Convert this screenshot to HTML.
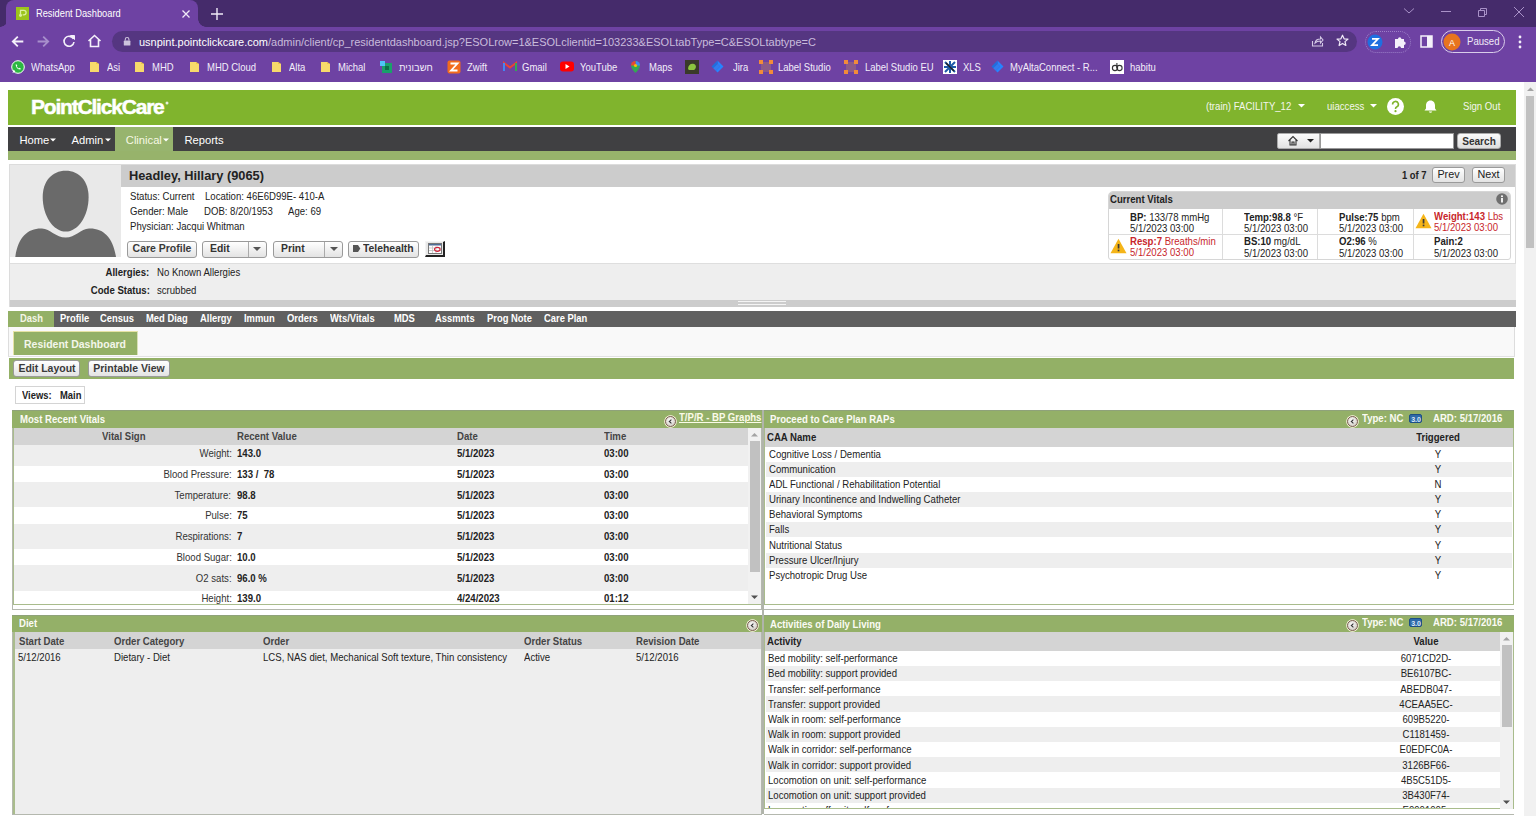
<!DOCTYPE html>
<html><head><meta charset="utf-8"><title>Resident Dashboard</title>
<style>
html,body{margin:0;padding:0;width:1536px;height:816px;overflow:hidden;background:#fff}
body{position:relative;font-family:"Liberation Sans",sans-serif}
.t{position:absolute;white-space:nowrap;font-family:"Liberation Sans",sans-serif}
svg{overflow:visible}
</style></head><body>
<div style="position:absolute;left:0px;top:0px;width:1536px;height:27px;background:#452b6b;"></div>
<div style="position:absolute;left:0px;top:27px;width:1536px;height:55px;background:#6e42a3;"></div>
<div style="position:absolute;left:6px;top:0px;width:192px;height:27px;background:#6e42a3;border-radius:8px 8px 0 0"></div>
<div style="position:absolute;left:0px;top:19px;width:6px;height:8px;background:radial-gradient(circle at 0 0, #452b6b 7.5px, #6e42a3 8px);"></div>
<div style="position:absolute;left:198px;top:19px;width:8px;height:8px;background:radial-gradient(circle at 100% 0, #452b6b 7.5px, #6e42a3 8px);"></div>
<div style="position:absolute;left:16px;top:7px;width:13px;height:13px;background:#9cc41c;"></div>
<svg style="position:absolute;left:16px;top:7px;" width="13" height="13" viewBox="0 0 13 13"><path d="M4.5 9.5 V3.3 H7.8 A2.3 2.3 0 0 1 7.8 7.9 H6.6" stroke="#dcef9e" stroke-width="1.3" fill="none"/><circle cx="4.5" cy="8.3" r="1.5" fill="#dcef9e"/></svg>
<div class="t" style="left:35.5px;top:8.3px;font-size:10.044px;line-height:12px;font-weight:normal;color:#ffffff;transform:scaleX(0.9259);transform-origin:0 0;">Resident Dashboard</div>
<svg style="position:absolute;left:181px;top:9px;" width="10" height="10" viewBox="0 0 10 10"><path d="M1.5 1.5 L8.5 8.5 M8.5 1.5 L1.5 8.5" stroke="#f0eaf8" stroke-width="1.3"/></svg>
<svg style="position:absolute;left:209.5px;top:7px;" width="14" height="14" viewBox="0 0 14 14"><path d="M7 1 V13 M1 7 H13" stroke="#f0eaf8" stroke-width="1.4"/></svg>
<svg style="position:absolute;left:1403px;top:7px;" width="12" height="8" viewBox="0 0 12 8"><path d="M1 1.5 L6 6 L11 1.5" stroke="#a992c8" stroke-width="1" fill="none"/></svg>
<svg style="position:absolute;left:1440px;top:10px;" width="12" height="3" viewBox="0 0 12 3"><path d="M1 1.5 H11" stroke="#a992c8" stroke-width="1"/></svg>
<svg style="position:absolute;left:1476px;top:6px;" width="12" height="12" viewBox="0 0 12 12"><path d="M2.5 4.5 h6 v6 h-6 z M4.5 4.5 v-2 h6 v6 h-2" stroke="#a992c8" stroke-width="1" fill="none"/></svg>
<svg style="position:absolute;left:1513px;top:6px;" width="12" height="12" viewBox="0 0 12 12"><path d="M1 1 L11 11 M11 1 L1 11" stroke="#a992c8" stroke-width="1"/></svg>
<svg style="position:absolute;left:10px;top:35px;" width="15" height="13" viewBox="0 0 15 13"><path d="M13.3 6.5 H3 M7.8 1.6 L2.8 6.5 L7.8 11.4" stroke="#f4f0fa" stroke-width="1.8" fill="none"/></svg>
<svg style="position:absolute;left:36px;top:35px;" width="15" height="13" viewBox="0 0 15 13"><path d="M1.6 6.5 H12 M7.2 1.6 L12.2 6.5 L7.2 11.4" stroke="#a88fcc" stroke-width="1.8" fill="none"/></svg>
<svg style="position:absolute;left:62px;top:34px;" width="14" height="14" viewBox="0 0 14 14"><path d="M11.5 5 A5 5 0 1 0 12 8" stroke="#f4f0fa" stroke-width="1.6" fill="none"/><path d="M8.5 1.5 H12.5 V5.5 z" fill="#f4f0fa" stroke="#f4f0fa" stroke-width="1"/></svg>
<svg style="position:absolute;left:87px;top:34px;" width="15" height="14" viewBox="0 0 15 14"><path d="M1.5 7 L7.5 1.5 L13.5 7 M3.5 5.5 V12.5 H11.5 V5.5" stroke="#f4f0fa" stroke-width="1.6" fill="none"/></svg>
<div style="position:absolute;left:112px;top:31px;width:1245px;height:21px;background:#553681;border-radius:11px"></div>
<svg style="position:absolute;left:122px;top:36px;" width="10" height="11" viewBox="0 0 10 11"><rect x="1.8" y="4.6" width="6.6" height="5" rx="0.6" fill="#cdc3dc"/><path d="M3.3 4.6 V3.3 A1.8 1.8 0 0 1 6.9 3.3 V4.6" stroke="#cdc3dc" stroke-width="1.1" fill="none"/></svg>
<div class="t" style="left:139px;top:35.5px;font-size:11px;line-height:13px;color:#c9bcdc;white-space:nowrap"><span style="color:#fff">usnpint.pointclickcare.com</span>/admin/client/cp_residentdashboard.jsp?ESOLrow=1&amp;ESOLclientid=103233&amp;ESOLtabType=C&amp;ESOLtabtype=C</div>
<svg style="position:absolute;left:1311px;top:35px;" width="13" height="12" viewBox="0 0 13 12"><path d="M1.5 6 V11 H11.5 V8 M4 8 C4.5 5 7 4 9.5 4 V2 L12 5 L9.5 8 V6 C7 6 5.5 6.5 4 8z" stroke="#d5cae6" stroke-width="1.1" fill="none"/></svg>
<svg style="position:absolute;left:1336px;top:34px;" width="13" height="13" viewBox="0 0 13 13"><path d="M6.5 1.2 L8.1 4.8 L12 5.1 L9 7.6 L9.9 11.5 L6.5 9.4 L3.1 11.5 L4 7.6 L1 5.1 L4.9 4.8 Z" stroke="#f0eaf8" stroke-width="1.2" fill="none" stroke-linejoin="round"/></svg>
<div style="position:absolute;left:1365px;top:31px;width:46px;height:22px;background:transparent;border:1px dotted #9c7fc7;border-radius:11px;box-sizing:border-box"></div>
<svg style="position:absolute;left:1367px;top:34px;" width="16" height="16" viewBox="0 0 16 16"><circle cx="8" cy="8" r="7.5" fill="#1f6fe0"/><path d="M5 4.8 H11 L5 11.2 H11" stroke="#fff" stroke-width="1.7" fill="none"/></svg>
<svg style="position:absolute;left:1393px;top:35px;" width="15" height="14" viewBox="0 0 15 14"><path d="M2 4 H5 A1.7 1.7 0 1 1 8.4 4 H11 V6.5 A1.7 1.7 0 1 1 11 9.9 V13 H8 A1.7 1.7 0 1 0 4.6 13 H2 Z" fill="#f4f0fa"/></svg>
<svg style="position:absolute;left:1420px;top:35px;" width="13" height="13" viewBox="0 0 13 13"><rect x="1" y="1" width="11" height="11" stroke="#f4f0fa" stroke-width="1.5" fill="none"/><rect x="7" y="1" width="5" height="11" fill="#f4f0fa"/></svg>
<div style="position:absolute;left:1441px;top:30px;width:64px;height:23px;background:transparent;border:1px solid #d9cdea;border-radius:12px;box-sizing:border-box"></div>
<svg style="position:absolute;left:1443px;top:33px;" width="18" height="18" viewBox="0 0 18 18"><circle cx="9" cy="9" r="8.5" fill="#e8741e"/></svg>
<div class="t" style="left:1302px;width:300px;text-align:center;top:36.8px;font-size:9.72px;line-height:12px;font-weight:normal;color:#fff;transform:scaleX(0.9259);transform-origin:50% 0;">A</div>
<div class="t" style="left:1467px;top:36.3px;font-size:10.368px;line-height:12px;font-weight:normal;color:#f0eaf8;transform:scaleX(0.9259);transform-origin:0 0;">Paused</div>
<svg style="position:absolute;left:1517px;top:35px;" width="6" height="14" viewBox="0 0 6 14"><circle cx="3" cy="2" r="1.4" fill="#f4f0fa"/><circle cx="3" cy="7" r="1.4" fill="#f4f0fa"/><circle cx="3" cy="12" r="1.4" fill="#f4f0fa"/></svg>
<svg style="position:absolute;left:11px;top:60px;" width="14" height="14" viewBox="0 0 14 14"><circle cx="7" cy="7" r="6.3" fill="#2cb742" stroke="#fff" stroke-width="1"/><path d="M1.5 13 L2.5 9.5 L4.5 11.5z" fill="#fff"/><path d="M4.6 4.5 C4.8 7.5 6.8 9.5 9.5 9.6 L9.7 8.4 L8.5 7.8 L7.8 8.4 C6.9 8 6.1 7.2 5.7 6.3 L6.3 5.6 L5.8 4.4 Z" fill="#fff"/></svg>
<div class="t" style="left:30.5px;top:61.8px;font-size:10.26px;line-height:12px;font-weight:normal;color:#f3eefa;transform:scaleX(0.9259);transform-origin:0 0;">WhatsApp</div>
<svg style="position:absolute;left:89px;top:61px;" width="11" height="12" viewBox="0 0 11 12"><path d="M1 1 H7 L10 3 V11 H1 Z" fill="#f7d96b"/><path d="M7 1 V3 H10" fill="#e9c24a"/></svg>
<div class="t" style="left:106.5px;top:61.8px;font-size:10.26px;line-height:12px;font-weight:normal;color:#f3eefa;transform:scaleX(0.9259);transform-origin:0 0;">Asi</div>
<svg style="position:absolute;left:134px;top:61px;" width="11" height="12" viewBox="0 0 11 12"><path d="M1 1 H7 L10 3 V11 H1 Z" fill="#f7d96b"/><path d="M7 1 V3 H10" fill="#e9c24a"/></svg>
<div class="t" style="left:152px;top:61.8px;font-size:10.26px;line-height:12px;font-weight:normal;color:#f3eefa;transform:scaleX(0.9259);transform-origin:0 0;">MHD</div>
<svg style="position:absolute;left:189px;top:61px;" width="11" height="12" viewBox="0 0 11 12"><path d="M1 1 H7 L10 3 V11 H1 Z" fill="#f7d96b"/><path d="M7 1 V3 H10" fill="#e9c24a"/></svg>
<div class="t" style="left:206.5px;top:61.8px;font-size:10.26px;line-height:12px;font-weight:normal;color:#f3eefa;transform:scaleX(0.9259);transform-origin:0 0;">MHD Cloud</div>
<svg style="position:absolute;left:271px;top:61px;" width="11" height="12" viewBox="0 0 11 12"><path d="M1 1 H7 L10 3 V11 H1 Z" fill="#f7d96b"/><path d="M7 1 V3 H10" fill="#e9c24a"/></svg>
<div class="t" style="left:289px;top:61.8px;font-size:10.26px;line-height:12px;font-weight:normal;color:#f3eefa;transform:scaleX(0.9259);transform-origin:0 0;">Alta</div>
<svg style="position:absolute;left:320px;top:61px;" width="11" height="12" viewBox="0 0 11 12"><path d="M1 1 H7 L10 3 V11 H1 Z" fill="#f7d96b"/><path d="M7 1 V3 H10" fill="#e9c24a"/></svg>
<div class="t" style="left:338px;top:61.8px;font-size:10.26px;line-height:12px;font-weight:normal;color:#f3eefa;transform:scaleX(0.9259);transform-origin:0 0;">Michal</div>
<svg style="position:absolute;left:380px;top:61px;" width="13" height="13" viewBox="0 0 13 13"><rect x="2" y="2" width="10" height="10" fill="#1aa06a"/><rect x="0" y="0" width="5" height="5" fill="#4fc3f7"/><rect x="5" y="5" width="4" height="4" fill="#0d6e47"/></svg>
<div class="t" style="left:399px;top:61.8px;font-size:10.26px;line-height:12px;font-weight:normal;color:#f3eefa;transform:scaleX(0.9259);transform-origin:0 0;">חשבונית</div>
<svg style="position:absolute;left:447px;top:60px;" width="14" height="14" viewBox="0 0 14 14"><rect x="0.5" y="0.5" width="13" height="13" rx="2" fill="#f26b1d"/><path d="M3.5 3.5 H10.5 L4 10.5 H10.5" stroke="#fff" stroke-width="1.8" fill="none"/></svg>
<div class="t" style="left:466.5px;top:61.8px;font-size:10.26px;line-height:12px;font-weight:normal;color:#f3eefa;transform:scaleX(0.9259);transform-origin:0 0;">Zwift</div>
<svg style="position:absolute;left:503px;top:61px;" width="14" height="11" viewBox="0 0 14 11"><path d="M1 10 V2 L7 6.5 L13 2 V10" stroke="#ea4335" stroke-width="2" fill="none"/><path d="M1 10 V2" stroke="#4285f4" stroke-width="2"/><path d="M13 10 V2" stroke="#34a853" stroke-width="2"/></svg>
<div class="t" style="left:522px;top:61.8px;font-size:10.26px;line-height:12px;font-weight:normal;color:#f3eefa;transform:scaleX(0.9259);transform-origin:0 0;">Gmail</div>
<svg style="position:absolute;left:560px;top:61px;" width="14" height="11" viewBox="0 0 14 11"><rect x="0" y="0.5" width="14" height="10" rx="3" fill="#ff0000"/><path d="M5.5 3 L9.5 5.5 L5.5 8z" fill="#fff"/></svg>
<div class="t" style="left:580px;top:61.8px;font-size:10.26px;line-height:12px;font-weight:normal;color:#f3eefa;transform:scaleX(0.9259);transform-origin:0 0;">YouTube</div>
<svg style="position:absolute;left:630px;top:60px;" width="11" height="14" viewBox="0 0 11 14"><path d="M5.5 1 A4.5 4.5 0 0 1 10 5.5 C10 8.5 5.5 13 5.5 13 C5.5 13 1 8.5 1 5.5 A4.5 4.5 0 0 1 5.5 1z" fill="#34a853"/><path d="M5.5 1 A4.5 4.5 0 0 1 10 5.5 L5.5 5.5z" fill="#4285f4"/><path d="M1 5.5 A4.5 4.5 0 0 1 5.5 1 L5.5 5.5z" fill="#ea4335"/><circle cx="5.5" cy="5.5" r="1.6" fill="#fbbc04"/></svg>
<div class="t" style="left:648.5px;top:61.8px;font-size:10.26px;line-height:12px;font-weight:normal;color:#f3eefa;transform:scaleX(0.9259);transform-origin:0 0;">Maps</div>
<svg style="position:absolute;left:685px;top:60px;" width="14" height="14" viewBox="0 0 14 14"><rect x="0" y="0" width="14" height="14" fill="#3a3a2a"/><path d="M3 9 C3 5 6 3 9 4 C12 5 11 9 9 10 H4z" fill="#8cc63f"/></svg>
<svg style="position:absolute;left:711px;top:60px;" width="13" height="14" viewBox="0 0 13 14"><path d="M6.5 0.5 L12.5 6.5 L6.5 12.5 L4.8 10.8 L9.1 6.5 L6.5 3.9 Z" fill="#2684ff"/><path d="M6.5 3.9 L2.2 8.2 L0.5 6.5 L6.5 0.5 Z" fill="#1d6fe0"/><path d="M4.8 10.8 L2.2 8.2 L6.5 3.9 L9.1 6.5 Z" fill="#2f7df0"/></svg>
<div class="t" style="left:733px;top:61.8px;font-size:10.26px;line-height:12px;font-weight:normal;color:#f3eefa;transform:scaleX(0.9259);transform-origin:0 0;">Jira</div>
<svg style="position:absolute;left:759px;top:60px;" width="14" height="14" viewBox="0 0 14 14"><rect x="2" y="2" width="10" height="10" fill="#8a5a8a"/><rect x="0" y="0" width="4" height="4" fill="#f28b3a"/><rect x="10" y="0" width="4" height="4" fill="#f28b3a"/><rect x="0" y="10" width="4" height="4" fill="#f28b3a"/><rect x="10" y="10" width="4" height="4" fill="#f28b3a"/></svg>
<div class="t" style="left:778px;top:61.8px;font-size:10.26px;line-height:12px;font-weight:normal;color:#f3eefa;transform:scaleX(0.9259);transform-origin:0 0;">Label Studio</div>
<svg style="position:absolute;left:844px;top:60px;" width="14" height="14" viewBox="0 0 14 14"><rect x="2" y="2" width="10" height="10" fill="#8a5a8a"/><rect x="0" y="0" width="4" height="4" fill="#f28b3a"/><rect x="10" y="0" width="4" height="4" fill="#f28b3a"/><rect x="0" y="10" width="4" height="4" fill="#f28b3a"/><rect x="10" y="10" width="4" height="4" fill="#f28b3a"/></svg>
<div class="t" style="left:864.5px;top:61.8px;font-size:10.26px;line-height:12px;font-weight:normal;color:#f3eefa;transform:scaleX(0.9259);transform-origin:0 0;">Label Studio EU</div>
<svg style="position:absolute;left:943px;top:60px;" width="14" height="14" viewBox="0 0 14 14"><rect x="0" y="0" width="14" height="14" fill="#fff"/><path d="M2 2 L12 12 M12 2 L2 12 M7 1 V13 M1 7 H13" stroke="#1e5aa8" stroke-width="2"/><path d="M3 3 L11 11" stroke="#222" stroke-width="1.5"/></svg>
<div class="t" style="left:962.5px;top:61.8px;font-size:10.26px;line-height:12px;font-weight:normal;color:#f3eefa;transform:scaleX(0.9259);transform-origin:0 0;">XLS</div>
<svg style="position:absolute;left:991px;top:60px;" width="13" height="14" viewBox="0 0 13 14"><path d="M6.5 0.5 L12.5 6.5 L6.5 12.5 L4.8 10.8 L9.1 6.5 L6.5 3.9 Z" fill="#2684ff"/><path d="M6.5 3.9 L2.2 8.2 L0.5 6.5 L6.5 0.5 Z" fill="#1d6fe0"/><path d="M4.8 10.8 L2.2 8.2 L6.5 3.9 L9.1 6.5 Z" fill="#2f7df0"/></svg>
<div class="t" style="left:1010px;top:61.8px;font-size:10.26px;line-height:12px;font-weight:normal;color:#f3eefa;transform:scaleX(0.9259);transform-origin:0 0;">MyAltaConnect - R...</div>
<svg style="position:absolute;left:1110px;top:60px;" width="14" height="14" viewBox="0 0 14 14"><rect x="0" y="0" width="14" height="14" fill="#fff"/><circle cx="5" cy="8" r="2.6" stroke="#333" stroke-width="1.1" fill="none"/><circle cx="9.5" cy="8" r="2.6" stroke="#333" stroke-width="1.1" fill="none"/><path d="M6.9 3 V8" stroke="#333" stroke-width="1.1"/></svg>
<div class="t" style="left:1130px;top:61.8px;font-size:10.26px;line-height:12px;font-weight:normal;color:#f3eefa;transform:scaleX(0.9259);transform-origin:0 0;">habitu</div>
<div style="position:absolute;left:0px;top:82px;width:1536px;height:734px;background:#ffffff;"></div>
<div style="position:absolute;left:1524px;top:82px;width:12px;height:734px;background:#f1f1f1;"></div>
<div style="position:absolute;left:1526px;top:96px;width:8px;height:152px;background:#c1c1c1;"></div>
<svg style="position:absolute;left:1525.5px;top:86px;" width="9" height="6" viewBox="0 0 9 6"><path d="M1 5 L4.5 1.5 L8 5z" fill="#a3a3a3"/></svg>
<div style="position:absolute;left:8px;top:90px;width:1508px;height:35px;background:#80b42d;"></div>
<div class="t" style="left:31px;top:94px;font-size:21px;line-height:26px;font-weight:bold;color:#fff;letter-spacing:-1.2px;-webkit-text-stroke:0.5px #fff">PointClickCare</div>
<svg style="position:absolute;left:164.5px;top:100.5px;" width="4" height="4" viewBox="0 0 4 4"><circle cx="2" cy="2" r="1.5" fill="#e8f0dc"/></svg>
<div class="t" style="left:1206.3px;top:100.8px;font-size:10.368px;line-height:12px;font-weight:normal;color:#f4f6ec;transform:scaleX(0.9259);transform-origin:0 0;">(train) FACILITY_12</div>
<svg style="position:absolute;left:1298px;top:104px;" width="7" height="4" viewBox="0 0 7 4"><path d="M0 0 H7 L3.5 3.5z" fill="#fff"/></svg>
<div class="t" style="left:1326.6px;top:100.8px;font-size:10.368px;line-height:12px;font-weight:normal;color:#f4f6ec;transform:scaleX(0.9259);transform-origin:0 0;">uiaccess</div>
<svg style="position:absolute;left:1369.5px;top:104px;" width="7" height="4" viewBox="0 0 7 4"><path d="M0 0 H7 L3.5 3.5z" fill="#fff"/></svg>
<svg style="position:absolute;left:1387px;top:98px;" width="17" height="17" viewBox="0 0 17 17"><circle cx="8.5" cy="8.5" r="8.5" fill="#fff"/><path d="M5.6 6.4 A2.9 2.9 0 1 1 9.6 9 C8.8 9.4 8.5 9.8 8.5 11" stroke="#80b42d" stroke-width="1.6" fill="none"/><circle cx="8.5" cy="13.2" r="1.1" fill="#80b42d"/></svg>
<svg style="position:absolute;left:1423px;top:99px;" width="15" height="15" viewBox="0 0 15 15"><path d="M7.5 1.5 C4.5 1.5 3 4 3 6.5 V9.5 L1.5 11.5 H13.5 L12 9.5 V6.5 C12 4 10.5 1.5 7.5 1.5z" fill="#fff"/><path d="M5.8 12.5 A1.8 1.8 0 0 0 9.2 12.5z" fill="#fff"/></svg>
<div class="t" style="left:1462.8px;top:100.8px;font-size:10.368px;line-height:12px;font-weight:normal;color:#f4f6ec;transform:scaleX(0.9259);transform-origin:0 0;">Sign Out</div>
<div style="position:absolute;left:8px;top:127px;width:1508px;height:24px;background:#404042;"></div>
<div style="position:absolute;left:114.6px;top:127px;width:58.6px;height:24px;background:#97b46e;"></div>
<div class="t" style="left:19.5px;top:132.5px;font-size:11.2px;line-height:14px;font-weight:normal;color:#fff;transform-origin:0 0;">Home</div>
<svg style="position:absolute;left:50px;top:138px;" width="6" height="4" viewBox="0 0 6 4"><path d="M0 0.5 H6 L3 3.5z" fill="#fff"/></svg>
<div class="t" style="left:71.5px;top:132.5px;font-size:11.2px;line-height:14px;font-weight:normal;color:#fff;transform-origin:0 0;">Admin</div>
<svg style="position:absolute;left:105px;top:138px;" width="6" height="4" viewBox="0 0 6 4"><path d="M0 0.5 H6 L3 3.5z" fill="#fff"/></svg>
<div class="t" style="left:125.8px;top:132.5px;font-size:11.2px;line-height:14px;font-weight:normal;color:#f6f8e4;transform-origin:0 0;">Clinical</div>
<svg style="position:absolute;left:163.3px;top:138px;" width="6" height="4" viewBox="0 0 6 4"><path d="M0 0.5 H6 L3 3.5z" fill="#fff"/></svg>
<div class="t" style="left:184.4px;top:132.5px;font-size:11.2px;line-height:14px;font-weight:normal;color:#fff;transform-origin:0 0;">Reports</div>
<div style="position:absolute;left:1277px;top:133px;width:43px;height:16px;background:linear-gradient(#fbfbfb,#e2e2e2);border:1px solid #aaa;border-radius:2px 0 0 2px;box-sizing:border-box"></div>
<svg style="position:absolute;left:1287px;top:135px;" width="12" height="11" viewBox="0 0 12 11"><path d="M1.5 6 L6 1.5 L10.5 6 M3 5 V10 H9 V5 M5 10 V7 H7 V10" stroke="#333" stroke-width="1.1" fill="none"/></svg>
<svg style="position:absolute;left:1307px;top:139px;" width="7" height="4" viewBox="0 0 7 4"><path d="M0 0 H7 L3.5 3.5z" fill="#222"/></svg>
<div style="position:absolute;left:1320px;top:133px;width:134px;height:16px;background:#fff;border:1px solid #999;box-sizing:border-box"></div>
<div style="position:absolute;left:1457px;top:133px;width:44px;height:16px;background:linear-gradient(#fbfbfb,#dedede);border:1px solid #aaa;border-radius:3px;box-sizing:border-box"></div>
<div class="t" style="left:1329px;width:300px;text-align:center;top:135.0px;font-size:10.908px;line-height:12px;font-weight:bold;color:#333;transform:scaleX(0.9259);transform-origin:50% 0;">Search</div>
<div style="position:absolute;left:8px;top:151px;width:1508px;height:9px;background:#97b36b;"></div>
<div style="position:absolute;left:9px;top:164px;width:1507px;height:143px;background:#fff;border:1px solid #dcdcdc;box-sizing:border-box"></div>
<div style="position:absolute;left:10px;top:165px;width:111px;height:92px;background:#e9e9e9;"></div>
<svg style="position:absolute;left:10px;top:165px;" width="111" height="92" viewBox="0 0 111 92"><path d="M55.7 5.8 C69.5 5.8 78.6 16.5 78.6 32 C78.6 51 68 66.6 55.7 66.6 C43.4 66.6 32.7 51 32.7 32 C32.7 16.5 41.9 5.8 55.7 5.8z" fill="#6a6a6a"/><path d="M5.3 92 C8 72 18 63 32 63.5 C40 64 46 72.5 55.7 72.5 C65 72.5 71 64 79 63.5 C93 63 103 72 106 92z" fill="#6a6a6a"/></svg>
<div style="position:absolute;left:121px;top:165px;width:1394px;height:22px;background:#cccccc;"></div>
<div class="t" style="left:129px;top:167.5px;font-size:12.8px;line-height:15px;font-weight:bold;color:#222;transform-origin:0 0;">Headley, Hillary (9065)</div>
<div class="t" style="left:1402px;top:169.8px;font-size:10.152px;line-height:12px;font-weight:bold;color:#222;transform:scaleX(0.9259);transform-origin:0 0;">1 of 7</div>
<div style="position:absolute;left:1432px;top:167px;width:33px;height:16px;background:linear-gradient(#ffffff,#e3e3e3);border:1px solid #9a9a9a;border-radius:3px;box-sizing:border-box;"></div>
<div class="t" style="left:1298.5px;width:300px;text-align:center;top:167.5px;font-size:10.8px;line-height:12px;font-weight:normal;color:#222;transform-origin:50% 0;">Prev</div>
<div style="position:absolute;left:1472px;top:167px;width:33px;height:16px;background:linear-gradient(#ffffff,#e3e3e3);border:1px solid #9a9a9a;border-radius:3px;box-sizing:border-box;"></div>
<div class="t" style="left:1338.5px;width:300px;text-align:center;top:167.5px;font-size:10.8px;line-height:12px;font-weight:normal;color:#222;transform-origin:50% 0;">Next</div>
<div class="t" style="left:129.7px;top:190.8px;font-size:10.368px;line-height:12px;font-weight:normal;color:#222;transform:scaleX(0.9259);transform-origin:0 0;">Status: Current</div>
<div class="t" style="left:205.3px;top:190.8px;font-size:10.368px;line-height:12px;font-weight:normal;color:#222;transform:scaleX(0.9259);transform-origin:0 0;">Location: 46E6D99E- 410-A</div>
<div class="t" style="left:129.7px;top:205.8px;font-size:10.368px;line-height:12px;font-weight:normal;color:#222;transform:scaleX(0.9259);transform-origin:0 0;">Gender: Male</div>
<div class="t" style="left:203.8px;top:205.8px;font-size:10.368px;line-height:12px;font-weight:normal;color:#222;transform:scaleX(0.9259);transform-origin:0 0;">DOB: 8/20/1953</div>
<div class="t" style="left:288px;top:205.8px;font-size:10.368px;line-height:12px;font-weight:normal;color:#222;transform:scaleX(0.9259);transform-origin:0 0;">Age: 69</div>
<div class="t" style="left:129.7px;top:221.10000000000002px;font-size:10.368px;line-height:12px;font-weight:normal;color:#222;transform:scaleX(0.9259);transform-origin:0 0;">Physician: Jacqui Whitman</div>
<div style="position:absolute;left:127px;top:240.5px;width:70px;height:17px;background:linear-gradient(#ffffff,#e3e3e3);border:1px solid #9a9a9a;border-radius:3px;box-sizing:border-box;"></div>
<div class="t" style="left:12.0px;width:300px;text-align:center;top:242.3px;font-size:11.34px;line-height:12px;font-weight:bold;color:#3a3a3a;transform:scaleX(0.9259);transform-origin:50% 0;">Care Profile</div>
<div style="position:absolute;left:202px;top:240.5px;width:65px;height:17px;background:linear-gradient(#ffffff,#e3e3e3);border:1px solid #9a9a9a;border-radius:3px;box-sizing:border-box;"></div>
<div class="t" style="left:209.5px;top:242.4px;font-size:11.232px;line-height:12px;font-weight:bold;color:#333;transform:scaleX(0.9259);transform-origin:0 0;">Edit</div>
<div style="position:absolute;left:247.5px;top:241.5px;width:1px;height:15px;background:#aaa;"></div>
<svg style="position:absolute;left:253px;top:247px;" width="8" height="5" viewBox="0 0 8 5"><path d="M0 0 H8 L4 4z" fill="#555"/></svg>
<div style="position:absolute;left:272.5px;top:240.5px;width:70px;height:17px;background:linear-gradient(#ffffff,#e3e3e3);border:1px solid #9a9a9a;border-radius:3px;box-sizing:border-box;"></div>
<div class="t" style="left:280.5px;top:242.4px;font-size:11.232px;line-height:12px;font-weight:bold;color:#333;transform:scaleX(0.9259);transform-origin:0 0;">Print</div>
<div style="position:absolute;left:324px;top:241.5px;width:1px;height:15px;background:#aaa;"></div>
<svg style="position:absolute;left:329.5px;top:247px;" width="8" height="5" viewBox="0 0 8 5"><path d="M0 0 H8 L4 4z" fill="#555"/></svg>
<div style="position:absolute;left:348px;top:240.5px;width:71px;height:17px;background:linear-gradient(#ffffff,#e3e3e3);border:1px solid #9a9a9a;border-radius:3px;box-sizing:border-box;"></div>
<svg style="position:absolute;left:352.5px;top:245px;" width="7" height="8" viewBox="0 0 7 8"><path d="M0 0 H5 L7.3 3.5 L5 7 H0z" fill="#555"/></svg>
<div class="t" style="left:363px;top:242.4px;font-size:11.232px;line-height:12px;font-weight:bold;color:#333;transform:scaleX(0.9259);transform-origin:0 0;">Telehealth</div>
<div style="position:absolute;left:425px;top:241px;width:20px;height:16px;background:#e8e8e8;border-top:1px solid #f4f4f4;border-left:1px solid #f4f4f4;border-right:2px solid #222;border-bottom:2px solid #222;box-sizing:border-box"></div>
<svg style="position:absolute;left:427.5px;top:243px;" width="14" height="11" viewBox="0 0 14 11"><rect x="0.5" y="0.5" width="13" height="10" fill="#fff" stroke="#777" stroke-width="1"/><rect x="1" y="1" width="12" height="1.5" fill="#4f6d96"/><path d="M1 5 H13 M1 7.5 H13 M4.5 2.5 V10 M8 2.5 V10" stroke="#bbb" stroke-width="0.7"/><ellipse cx="9.3" cy="6.3" rx="2.8" ry="2" fill="none" stroke="#d0233a" stroke-width="1.2"/></svg>
<div style="position:absolute;left:1108px;top:191px;width:403px;height:69px;background:#fff;border:1px solid #d6d6d6;border-radius:5px 5px 3px 3px;box-sizing:border-box"></div>
<div style="position:absolute;left:1109px;top:192px;width:401px;height:17px;background:#cccccc;border-radius:4px 4px 0 0"></div>
<div class="t" style="left:1110.3px;top:194.0px;font-size:10.368px;line-height:12px;font-weight:bold;color:#222;transform:scaleX(0.9259);transform-origin:0 0;">Current Vitals</div>
<svg style="position:absolute;left:1496px;top:193px;" width="12" height="12" viewBox="0 0 12 12"><circle cx="6" cy="6" r="5.8" fill="#6f6f6f"/><rect x="5.1" y="5" width="1.8" height="4.5" fill="#fff"/><circle cx="6" cy="3.2" r="1" fill="#fff"/></svg>
<div style="position:absolute;left:1222px;top:209px;width:1px;height:50px;background:#dcdcdc;"></div>
<div style="position:absolute;left:1317px;top:209px;width:1px;height:50px;background:#dcdcdc;"></div>
<div style="position:absolute;left:1413px;top:209px;width:1px;height:50px;background:#dcdcdc;"></div>
<div style="position:absolute;left:1109px;top:234px;width:401px;height:1px;background:#dcdcdc;"></div>
<div class="t" style="left:1129.8px;top:211.5px;font-size:10.368px;line-height:12px;color:#222;transform:scaleX(0.9259);transform-origin:0 0"><b>BP:</b> 133/78 mmHg</div>
<div class="t" style="left:1129.8px;top:223.0px;font-size:10.368px;line-height:12px;color:#222;transform:scaleX(0.9259);transform-origin:0 0"><b></b>5/1/2023 03:00</div>
<div class="t" style="left:1243.6px;top:211.5px;font-size:10.368px;line-height:12px;color:#222;transform:scaleX(0.9259);transform-origin:0 0"><b>Temp:98.8</b> °F</div>
<div class="t" style="left:1243.6px;top:223.0px;font-size:10.368px;line-height:12px;color:#222;transform:scaleX(0.9259);transform-origin:0 0"><b></b>5/1/2023 03:00</div>
<div class="t" style="left:1339px;top:211.5px;font-size:10.368px;line-height:12px;color:#222;transform:scaleX(0.9259);transform-origin:0 0"><b>Pulse:75</b> bpm</div>
<div class="t" style="left:1339px;top:223.0px;font-size:10.368px;line-height:12px;color:#222;transform:scaleX(0.9259);transform-origin:0 0"><b></b>5/1/2023 03:00</div>
<div class="t" style="left:1434px;top:211.0px;font-size:10.368px;line-height:12px;color:#c8262b;transform:scaleX(0.9259);transform-origin:0 0"><b>Weight:143</b> Lbs</div>
<div class="t" style="left:1434px;top:222.3px;font-size:10.368px;line-height:12px;color:#c8262b;transform:scaleX(0.9259);transform-origin:0 0"><b></b>5/1/2023 03:00</div>
<div class="t" style="left:1129.8px;top:235.8px;font-size:10.368px;line-height:12px;color:#c8262b;transform:scaleX(0.9259);transform-origin:0 0"><b>Resp:7</b> Breaths/min</div>
<div class="t" style="left:1129.8px;top:247.10000000000002px;font-size:10.368px;line-height:12px;color:#c8262b;transform:scaleX(0.9259);transform-origin:0 0"><b></b>5/1/2023 03:00</div>
<div class="t" style="left:1243.6px;top:236.10000000000002px;font-size:10.368px;line-height:12px;color:#222;transform:scaleX(0.9259);transform-origin:0 0"><b>BS:10</b> mg/dL</div>
<div class="t" style="left:1243.6px;top:247.5px;font-size:10.368px;line-height:12px;color:#222;transform:scaleX(0.9259);transform-origin:0 0"><b></b>5/1/2023 03:00</div>
<div class="t" style="left:1339px;top:236.10000000000002px;font-size:10.368px;line-height:12px;color:#222;transform:scaleX(0.9259);transform-origin:0 0"><b>O2:96</b> %</div>
<div class="t" style="left:1339px;top:247.5px;font-size:10.368px;line-height:12px;color:#222;transform:scaleX(0.9259);transform-origin:0 0"><b></b>5/1/2023 03:00</div>
<div class="t" style="left:1434px;top:236.10000000000002px;font-size:10.368px;line-height:12px;color:#222;transform:scaleX(0.9259);transform-origin:0 0"><b>Pain:2</b></div>
<div class="t" style="left:1434px;top:247.5px;font-size:10.368px;line-height:12px;color:#222;transform:scaleX(0.9259);transform-origin:0 0"><b></b>5/1/2023 03:00</div>
<svg style="position:absolute;left:1415.3px;top:213px;" width="17" height="16" viewBox="0 0 17 16"><path d="M8.5 0.8 L16.5 15.2 H0.5 Z" fill="#f5b519"/><rect x="7.7" y="6" width="1.7" height="4.5" fill="#3a3a3a"/><rect x="7.7" y="11.6" width="1.7" height="1.7" fill="#3a3a3a"/></svg>
<svg style="position:absolute;left:1110.3px;top:238px;" width="17" height="16" viewBox="0 0 17 16"><path d="M8.5 0.8 L16.5 15.2 H0.5 Z" fill="#f5b519"/><rect x="7.7" y="6" width="1.7" height="4.5" fill="#3a3a3a"/><rect x="7.7" y="11.6" width="1.7" height="1.7" fill="#3a3a3a"/></svg>
<div style="position:absolute;left:10px;top:263px;width:1505.5px;height:37px;background:#eeeeee;border-top:1px solid #dedede;box-sizing:border-box"></div>
<div class="t" style="right:1386.5px;top:267.3px;font-size:10.368px;line-height:12px;font-weight:bold;color:#222;transform:scaleX(0.9259);transform-origin:100% 0;">Allergies:</div>
<div class="t" style="left:157.2px;top:267.3px;font-size:10.368px;line-height:12px;font-weight:normal;color:#222;transform:scaleX(0.9259);transform-origin:0 0;">No Known Allergies</div>
<div class="t" style="right:1386.5px;top:285.1px;font-size:10.368px;line-height:12px;font-weight:bold;color:#222;transform:scaleX(0.9259);transform-origin:100% 0;">Code Status:</div>
<div class="t" style="left:157.2px;top:285.1px;font-size:10.368px;line-height:12px;font-weight:normal;color:#222;transform:scaleX(0.9259);transform-origin:0 0;">scrubbed</div>
<div style="position:absolute;left:10px;top:299.5px;width:1505.5px;height:7px;background:#cccccc;"></div>
<div style="position:absolute;left:738px;top:301px;width:48px;height:1px;background:#f4f4f4;"></div>
<div style="position:absolute;left:738px;top:303.5px;width:48px;height:1px;background:#f4f4f4;"></div>
<div style="position:absolute;left:8px;top:311px;width:1508px;height:15.5px;background:#606060;"></div>
<div style="position:absolute;left:8px;top:311px;width:46px;height:15.5px;background:#93b066;"></div>
<div class="t" style="left:19.5px;top:313.1px;font-size:10.152px;line-height:12px;font-weight:bold;color:#f3f6e6;transform:scaleX(0.9259);transform-origin:0 0;">Dash</div>
<div class="t" style="left:59.6px;top:313.1px;font-size:10.152px;line-height:12px;font-weight:bold;color:#fff;transform:scaleX(0.9259);transform-origin:0 0;">Profile</div>
<div class="t" style="left:100px;top:313.1px;font-size:10.152px;line-height:12px;font-weight:bold;color:#fff;transform:scaleX(0.9259);transform-origin:0 0;">Census</div>
<div class="t" style="left:146px;top:313.1px;font-size:10.152px;line-height:12px;font-weight:bold;color:#fff;transform:scaleX(0.9259);transform-origin:0 0;">Med Diag</div>
<div class="t" style="left:200px;top:313.1px;font-size:10.152px;line-height:12px;font-weight:bold;color:#fff;transform:scaleX(0.9259);transform-origin:0 0;">Allergy</div>
<div class="t" style="left:243.7px;top:313.1px;font-size:10.152px;line-height:12px;font-weight:bold;color:#fff;transform:scaleX(0.9259);transform-origin:0 0;">Immun</div>
<div class="t" style="left:287px;top:313.1px;font-size:10.152px;line-height:12px;font-weight:bold;color:#fff;transform:scaleX(0.9259);transform-origin:0 0;">Orders</div>
<div class="t" style="left:329.5px;top:313.1px;font-size:10.152px;line-height:12px;font-weight:bold;color:#fff;transform:scaleX(0.9259);transform-origin:0 0;">Wts/Vitals</div>
<div class="t" style="left:394px;top:313.1px;font-size:10.152px;line-height:12px;font-weight:bold;color:#fff;transform:scaleX(0.9259);transform-origin:0 0;">MDS</div>
<div class="t" style="left:434.5px;top:313.1px;font-size:10.152px;line-height:12px;font-weight:bold;color:#fff;transform:scaleX(0.9259);transform-origin:0 0;">Assmnts</div>
<div class="t" style="left:486.5px;top:313.1px;font-size:10.152px;line-height:12px;font-weight:bold;color:#fff;transform:scaleX(0.9259);transform-origin:0 0;">Prog Note</div>
<div class="t" style="left:543.5px;top:313.1px;font-size:10.152px;line-height:12px;font-weight:bold;color:#fff;transform:scaleX(0.9259);transform-origin:0 0;">Care Plan</div>
<div style="position:absolute;left:8px;top:326.5px;width:1507px;height:30.5px;background:#f9f9f9;border-left:1px solid #ddd;border-right:1px solid #ddd;border-bottom:1px solid #e2e2e2;box-sizing:border-box"></div>
<div style="position:absolute;left:12.7px;top:330.8px;width:125.6px;height:24.6px;background:#93b066;border-top:1px solid #e6e3a4;border-left:1px solid #e6e3a4;border-right:1px solid #d8e0b8;box-sizing:border-box"></div>
<div class="t" style="left:24.4px;top:338.1px;font-size:11.34px;line-height:12px;font-weight:bold;color:#f3f6ea;transform:scaleX(0.9259);transform-origin:0 0;">Resident Dashboard</div>
<div style="position:absolute;left:9.4px;top:357.7px;width:1505px;height:21.1px;background:#93b066;"></div>
<div style="position:absolute;left:13.3px;top:360px;width:67.2px;height:17.3px;background:linear-gradient(#ffffff,#e3e3e3);border:1px solid #9a9a9a;border-radius:3px;box-sizing:border-box;"></div>
<div class="t" style="left:-103.1px;width:300px;text-align:center;top:361.95px;font-size:11.34px;line-height:12px;font-weight:bold;color:#3a3a3a;transform:scaleX(0.9259);transform-origin:50% 0;">Edit Layout</div>
<div style="position:absolute;left:88.3px;top:360px;width:82px;height:17.3px;background:linear-gradient(#ffffff,#e3e3e3);border:1px solid #9a9a9a;border-radius:3px;box-sizing:border-box;"></div>
<div class="t" style="left:-20.69999999999999px;width:300px;text-align:center;top:361.95px;font-size:11.34px;line-height:12px;font-weight:bold;color:#3a3a3a;transform:scaleX(0.9259);transform-origin:50% 0;">Printable View</div>
<div style="position:absolute;left:15.2px;top:386px;width:69.4px;height:17.6px;background:#fff;border:1px solid #d4d4d4;box-sizing:border-box"></div>
<div class="t" style="left:21.5px;top:389.6px;font-size:10.152px;line-height:12px;font-weight:bold;color:#222;transform:scaleX(0.9259);transform-origin:0 0;">Views:</div>
<div class="t" style="left:59.6px;top:389.6px;font-size:10.152px;line-height:12px;font-weight:bold;color:#222;transform:scaleX(0.9259);transform-origin:0 0;">Main</div>
<div style="position:absolute;left:12px;top:410px;width:750px;height:200px;background:#fff;border:1px solid #b4b8ae;border-top:none;box-sizing:border-box"></div>
<div style="position:absolute;left:13px;top:410px;width:748px;height:195px;background:#fff;border:1px solid #a9bc8c;border-top:none;box-sizing:border-box"></div>
<div style="position:absolute;left:12px;top:410px;width:750px;height:18px;background:#94b068;border-top:1px solid #8fa27a;box-sizing:border-box"></div>
<div class="t" style="left:19.5px;top:414.1px;font-size:10.368px;line-height:12px;font-weight:bold;color:#fbfbf4;transform:scaleX(0.9259);transform-origin:0 0;">Most Recent Vitals</div>
<svg style="position:absolute;left:664px;top:415px;" width="13" height="13" viewBox="0 0 13 13"><defs><radialGradient id="cg" cx="0.45" cy="0.4" r="0.6"><stop offset="0" stop-color="#ffffff"/><stop offset="1" stop-color="#cfcac2"/></radialGradient></defs><circle cx="6.5" cy="6.5" r="5.9" fill="#f2efe8" stroke="#f6f3d8" stroke-width="0.8"/><circle cx="6.5" cy="6.5" r="5" fill="url(#cg)" stroke="#7a5f4c" stroke-width="1"/><path d="M7.4 4.6 L5.3 6.5 L7.4 8.4" stroke="#333" stroke-width="1.1" fill="none"/></svg>
<div class="t" style="left:679px;top:412.40000000000003px;font-size:10.368px;line-height:12px;font-weight:bold;color:#fbfbe8;transform:scaleX(0.9259);transform-origin:0 0;text-decoration:underline">T/P/R - BP Graphs</div>
<div style="position:absolute;left:14px;top:428px;width:734px;height:17px;background:#d4d4d4;"></div>
<div class="t" style="left:102px;top:431.1px;font-size:10.368px;line-height:12px;font-weight:bold;color:#444;transform:scaleX(0.9259);transform-origin:0 0;">Vital Sign</div>
<div class="t" style="left:236.5px;top:431.1px;font-size:10.368px;line-height:12px;font-weight:bold;color:#444;transform:scaleX(0.9259);transform-origin:0 0;">Recent Value</div>
<div class="t" style="left:456.8px;top:431.1px;font-size:10.368px;line-height:12px;font-weight:bold;color:#444;transform:scaleX(0.9259);transform-origin:0 0;">Date</div>
<div class="t" style="left:603.6px;top:431.1px;font-size:10.368px;line-height:12px;font-weight:bold;color:#444;transform:scaleX(0.9259);transform-origin:0 0;">Time</div>
<div style="position:absolute;left:14px;top:445px;width:734px;height:21px;background:#eeeeee;"></div>
<div style="position:absolute;left:14px;top:466px;width:734px;height:16px;background:#fff;"></div>
<div style="position:absolute;left:14px;top:482px;width:734px;height:25px;background:#eeeeee;"></div>
<div style="position:absolute;left:14px;top:507px;width:734px;height:17px;background:#fff;"></div>
<div style="position:absolute;left:14px;top:524px;width:734px;height:25px;background:#eeeeee;"></div>
<div style="position:absolute;left:14px;top:549px;width:734px;height:16px;background:#fff;"></div>
<div style="position:absolute;left:14px;top:565px;width:734px;height:26px;background:#eeeeee;"></div>
<div style="position:absolute;left:14px;top:591px;width:734px;height:13px;background:#fff;"></div>
<div class="t" style="right:1304.5px;top:448.1px;font-size:10.368px;line-height:12px;font-weight:normal;color:#333;transform:scaleX(0.9259);transform-origin:100% 0;">Weight:</div>
<div class="t" style="left:236.5px;top:448.1px;font-size:10.368px;line-height:12px;font-weight:bold;color:#222;transform:scaleX(0.9259);transform-origin:0 0;white-space:pre">143.0</div>
<div class="t" style="left:456.8px;top:448.1px;font-size:10.368px;line-height:12px;font-weight:bold;color:#222;transform:scaleX(0.9259);transform-origin:0 0;">5/1/2023</div>
<div class="t" style="left:603.6px;top:448.1px;font-size:10.368px;line-height:12px;font-weight:bold;color:#222;transform:scaleX(0.9259);transform-origin:0 0;">03:00</div>
<div class="t" style="right:1304.5px;top:468.85px;font-size:10.368px;line-height:12px;font-weight:normal;color:#333;transform:scaleX(0.9259);transform-origin:100% 0;">Blood Pressure:</div>
<div class="t" style="left:236.5px;top:468.85px;font-size:10.368px;line-height:12px;font-weight:bold;color:#222;transform:scaleX(0.9259);transform-origin:0 0;white-space:pre">133 /  78</div>
<div class="t" style="left:456.8px;top:468.85px;font-size:10.368px;line-height:12px;font-weight:bold;color:#222;transform:scaleX(0.9259);transform-origin:0 0;">5/1/2023</div>
<div class="t" style="left:603.6px;top:468.85px;font-size:10.368px;line-height:12px;font-weight:bold;color:#222;transform:scaleX(0.9259);transform-origin:0 0;">03:00</div>
<div class="t" style="right:1304.5px;top:489.6px;font-size:10.368px;line-height:12px;font-weight:normal;color:#333;transform:scaleX(0.9259);transform-origin:100% 0;">Temperature:</div>
<div class="t" style="left:236.5px;top:489.6px;font-size:10.368px;line-height:12px;font-weight:bold;color:#222;transform:scaleX(0.9259);transform-origin:0 0;white-space:pre">98.8</div>
<div class="t" style="left:456.8px;top:489.6px;font-size:10.368px;line-height:12px;font-weight:bold;color:#222;transform:scaleX(0.9259);transform-origin:0 0;">5/1/2023</div>
<div class="t" style="left:603.6px;top:489.6px;font-size:10.368px;line-height:12px;font-weight:bold;color:#222;transform:scaleX(0.9259);transform-origin:0 0;">03:00</div>
<div class="t" style="right:1304.5px;top:510.34999999999997px;font-size:10.368px;line-height:12px;font-weight:normal;color:#333;transform:scaleX(0.9259);transform-origin:100% 0;">Pulse:</div>
<div class="t" style="left:236.5px;top:510.34999999999997px;font-size:10.368px;line-height:12px;font-weight:bold;color:#222;transform:scaleX(0.9259);transform-origin:0 0;white-space:pre">75</div>
<div class="t" style="left:456.8px;top:510.34999999999997px;font-size:10.368px;line-height:12px;font-weight:bold;color:#222;transform:scaleX(0.9259);transform-origin:0 0;">5/1/2023</div>
<div class="t" style="left:603.6px;top:510.34999999999997px;font-size:10.368px;line-height:12px;font-weight:bold;color:#222;transform:scaleX(0.9259);transform-origin:0 0;">03:00</div>
<div class="t" style="right:1304.5px;top:531.0999999999999px;font-size:10.368px;line-height:12px;font-weight:normal;color:#333;transform:scaleX(0.9259);transform-origin:100% 0;">Respirations:</div>
<div class="t" style="left:236.5px;top:531.0999999999999px;font-size:10.368px;line-height:12px;font-weight:bold;color:#222;transform:scaleX(0.9259);transform-origin:0 0;white-space:pre">7</div>
<div class="t" style="left:456.8px;top:531.0999999999999px;font-size:10.368px;line-height:12px;font-weight:bold;color:#222;transform:scaleX(0.9259);transform-origin:0 0;">5/1/2023</div>
<div class="t" style="left:603.6px;top:531.0999999999999px;font-size:10.368px;line-height:12px;font-weight:bold;color:#222;transform:scaleX(0.9259);transform-origin:0 0;">03:00</div>
<div class="t" style="right:1304.5px;top:551.8499999999999px;font-size:10.368px;line-height:12px;font-weight:normal;color:#333;transform:scaleX(0.9259);transform-origin:100% 0;">Blood Sugar:</div>
<div class="t" style="left:236.5px;top:551.8499999999999px;font-size:10.368px;line-height:12px;font-weight:bold;color:#222;transform:scaleX(0.9259);transform-origin:0 0;white-space:pre">10.0</div>
<div class="t" style="left:456.8px;top:551.8499999999999px;font-size:10.368px;line-height:12px;font-weight:bold;color:#222;transform:scaleX(0.9259);transform-origin:0 0;">5/1/2023</div>
<div class="t" style="left:603.6px;top:551.8499999999999px;font-size:10.368px;line-height:12px;font-weight:bold;color:#222;transform:scaleX(0.9259);transform-origin:0 0;">03:00</div>
<div class="t" style="right:1304.5px;top:572.5999999999999px;font-size:10.368px;line-height:12px;font-weight:normal;color:#333;transform:scaleX(0.9259);transform-origin:100% 0;">O2 sats:</div>
<div class="t" style="left:236.5px;top:572.5999999999999px;font-size:10.368px;line-height:12px;font-weight:bold;color:#222;transform:scaleX(0.9259);transform-origin:0 0;white-space:pre">96.0 %</div>
<div class="t" style="left:456.8px;top:572.5999999999999px;font-size:10.368px;line-height:12px;font-weight:bold;color:#222;transform:scaleX(0.9259);transform-origin:0 0;">5/1/2023</div>
<div class="t" style="left:603.6px;top:572.5999999999999px;font-size:10.368px;line-height:12px;font-weight:bold;color:#222;transform:scaleX(0.9259);transform-origin:0 0;">03:00</div>
<div class="t" style="right:1304.5px;top:593.3499999999999px;font-size:10.368px;line-height:12px;font-weight:normal;color:#333;transform:scaleX(0.9259);transform-origin:100% 0;">Height:</div>
<div class="t" style="left:236.5px;top:593.3499999999999px;font-size:10.368px;line-height:12px;font-weight:bold;color:#222;transform:scaleX(0.9259);transform-origin:0 0;white-space:pre">139.0</div>
<div class="t" style="left:456.8px;top:593.3499999999999px;font-size:10.368px;line-height:12px;font-weight:bold;color:#222;transform:scaleX(0.9259);transform-origin:0 0;">4/24/2023</div>
<div class="t" style="left:603.6px;top:593.3499999999999px;font-size:10.368px;line-height:12px;font-weight:bold;color:#222;transform:scaleX(0.9259);transform-origin:0 0;">01:12</div>
<div style="position:absolute;left:748px;top:428px;width:13px;height:176px;background:#f1f1f1;"></div>
<div style="position:absolute;left:750px;top:441px;width:9.5px;height:131px;background:#c1c1c1;"></div>
<svg style="position:absolute;left:750px;top:432px;" width="9" height="5" viewBox="0 0 9 5"><path d="M1 4.5 L4.5 1 L8 4.5z" fill="#a3a3a3"/></svg>
<svg style="position:absolute;left:750px;top:595px;" width="9" height="5" viewBox="0 0 9 5"><path d="M1 0.5 L4.5 4 L8 0.5z" fill="#505050"/></svg>
<div style="position:absolute;left:762px;top:410px;width:2px;height:404px;background:#b0b4aa;"></div>
<div style="position:absolute;left:764px;top:410px;width:750px;height:195px;background:#fff;border:1px solid #a9bc8c;border-top:none;box-sizing:border-box"></div>
<div style="position:absolute;left:764px;top:410px;width:750px;height:18px;background:#94b068;border-top:1px solid #8fa27a;box-sizing:border-box"></div>
<div class="t" style="left:770.4px;top:414.1px;font-size:10.368px;line-height:12px;font-weight:bold;color:#fbfbf4;transform:scaleX(0.9259);transform-origin:0 0;">Proceed to Care Plan RAPs</div>
<svg style="position:absolute;left:1346px;top:415px;" width="13" height="13" viewBox="0 0 13 13"><defs><radialGradient id="cg" cx="0.45" cy="0.4" r="0.6"><stop offset="0" stop-color="#ffffff"/><stop offset="1" stop-color="#cfcac2"/></radialGradient></defs><circle cx="6.5" cy="6.5" r="5.9" fill="#f2efe8" stroke="#f6f3d8" stroke-width="0.8"/><circle cx="6.5" cy="6.5" r="5" fill="url(#cg)" stroke="#7a5f4c" stroke-width="1"/><path d="M7.4 4.6 L5.3 6.5 L7.4 8.4" stroke="#333" stroke-width="1.1" fill="none"/></svg>
<div class="t" style="left:1362px;top:412.8px;font-size:10.368px;line-height:12px;font-weight:bold;color:#fbfbf4;transform:scaleX(0.9259);transform-origin:0 0;">Type: NC</div>
<div style="position:absolute;left:1408.7px;top:413.6px;width:13.8px;height:9.2px;background:#2f6aa8;border-radius:2px;border:1px solid #1d4f85;box-sizing:border-box"></div>
<div class="t" style="left:1265.6px;width:300px;text-align:center;top:414.5px;font-size:7.56px;line-height:9px;font-weight:bold;color:#dde8f5;transform:scaleX(0.9259);transform-origin:50% 0;">3.0</div>
<div class="t" style="left:1433px;top:412.8px;font-size:10.368px;line-height:12px;font-weight:bold;color:#fbfbf4;transform:scaleX(0.9259);transform-origin:0 0;">ARD: 5/17/2016</div>
<div style="position:absolute;left:765px;top:428px;width:748px;height:18.7px;background:#d4d4d4;"></div>
<div class="t" style="left:766.5px;top:431.8px;font-size:10.368px;line-height:12px;font-weight:bold;color:#222;transform:scaleX(0.9259);transform-origin:0 0;">CAA Name</div>
<div class="t" style="left:1288px;width:300px;text-align:center;top:431.8px;font-size:10.368px;line-height:12px;font-weight:bold;color:#222;transform:scaleX(0.9259);transform-origin:50% 0;">Triggered</div>
<div style="position:absolute;left:766px;top:446.7px;width:746px;height:15.12px;background:#fff;"></div>
<div class="t" style="left:768.5px;top:448.8px;font-size:10.368px;line-height:12px;font-weight:normal;color:#222;transform:scaleX(0.9259);transform-origin:0 0;">Cognitive Loss / Dementia</div>
<div class="t" style="left:1288px;width:300px;text-align:center;top:448.8px;font-size:10.368px;line-height:12px;font-weight:normal;color:#222;transform:scaleX(0.9259);transform-origin:50% 0;">Y</div>
<div style="position:absolute;left:766px;top:461.82px;width:746px;height:15.12px;background:#eeeeee;"></div>
<div class="t" style="left:768.5px;top:463.92px;font-size:10.368px;line-height:12px;font-weight:normal;color:#222;transform:scaleX(0.9259);transform-origin:0 0;">Communication</div>
<div class="t" style="left:1288px;width:300px;text-align:center;top:463.92px;font-size:10.368px;line-height:12px;font-weight:normal;color:#222;transform:scaleX(0.9259);transform-origin:50% 0;">Y</div>
<div style="position:absolute;left:766px;top:476.94px;width:746px;height:15.12px;background:#fff;"></div>
<div class="t" style="left:768.5px;top:479.04px;font-size:10.368px;line-height:12px;font-weight:normal;color:#222;transform:scaleX(0.9259);transform-origin:0 0;">ADL Functional / Rehabilitation Potential</div>
<div class="t" style="left:1288px;width:300px;text-align:center;top:479.04px;font-size:10.368px;line-height:12px;font-weight:normal;color:#222;transform:scaleX(0.9259);transform-origin:50% 0;">N</div>
<div style="position:absolute;left:766px;top:492.06px;width:746px;height:15.12px;background:#eeeeee;"></div>
<div class="t" style="left:768.5px;top:494.16px;font-size:10.368px;line-height:12px;font-weight:normal;color:#222;transform:scaleX(0.9259);transform-origin:0 0;">Urinary Incontinence and Indwelling Catheter</div>
<div class="t" style="left:1288px;width:300px;text-align:center;top:494.16px;font-size:10.368px;line-height:12px;font-weight:normal;color:#222;transform:scaleX(0.9259);transform-origin:50% 0;">Y</div>
<div style="position:absolute;left:766px;top:507.18px;width:746px;height:15.12px;background:#fff;"></div>
<div class="t" style="left:768.5px;top:509.28000000000003px;font-size:10.368px;line-height:12px;font-weight:normal;color:#222;transform:scaleX(0.9259);transform-origin:0 0;">Behavioral Symptoms</div>
<div class="t" style="left:1288px;width:300px;text-align:center;top:509.28000000000003px;font-size:10.368px;line-height:12px;font-weight:normal;color:#222;transform:scaleX(0.9259);transform-origin:50% 0;">Y</div>
<div style="position:absolute;left:766px;top:522.3px;width:746px;height:15.12px;background:#eeeeee;"></div>
<div class="t" style="left:768.5px;top:524.3999999999999px;font-size:10.368px;line-height:12px;font-weight:normal;color:#222;transform:scaleX(0.9259);transform-origin:0 0;">Falls</div>
<div class="t" style="left:1288px;width:300px;text-align:center;top:524.3999999999999px;font-size:10.368px;line-height:12px;font-weight:normal;color:#222;transform:scaleX(0.9259);transform-origin:50% 0;">Y</div>
<div style="position:absolute;left:766px;top:537.42px;width:746px;height:15.12px;background:#fff;"></div>
<div class="t" style="left:768.5px;top:539.5199999999999px;font-size:10.368px;line-height:12px;font-weight:normal;color:#222;transform:scaleX(0.9259);transform-origin:0 0;">Nutritional Status</div>
<div class="t" style="left:1288px;width:300px;text-align:center;top:539.5199999999999px;font-size:10.368px;line-height:12px;font-weight:normal;color:#222;transform:scaleX(0.9259);transform-origin:50% 0;">Y</div>
<div style="position:absolute;left:766px;top:552.54px;width:746px;height:15.12px;background:#eeeeee;"></div>
<div class="t" style="left:768.5px;top:554.6399999999999px;font-size:10.368px;line-height:12px;font-weight:normal;color:#222;transform:scaleX(0.9259);transform-origin:0 0;">Pressure Ulcer/Injury</div>
<div class="t" style="left:1288px;width:300px;text-align:center;top:554.6399999999999px;font-size:10.368px;line-height:12px;font-weight:normal;color:#222;transform:scaleX(0.9259);transform-origin:50% 0;">Y</div>
<div style="position:absolute;left:766px;top:567.66px;width:746px;height:15.12px;background:#fff;"></div>
<div class="t" style="left:768.5px;top:569.7599999999999px;font-size:10.368px;line-height:12px;font-weight:normal;color:#222;transform:scaleX(0.9259);transform-origin:0 0;">Psychotropic Drug Use</div>
<div class="t" style="left:1288px;width:300px;text-align:center;top:569.7599999999999px;font-size:10.368px;line-height:12px;font-weight:normal;color:#222;transform:scaleX(0.9259);transform-origin:50% 0;">Y</div>
<div style="position:absolute;left:764px;top:609px;width:750px;height:1px;background:#b4b8ae;"></div>
<div style="position:absolute;left:12px;top:614.5px;width:750px;height:200px;background:#eeeeee;border:1px solid #b4b8ae;border-top:none;box-sizing:border-box"></div>
<div style="position:absolute;left:13px;top:614.5px;width:1.5px;height:199px;background:#a9bc8c;"></div>
<div style="position:absolute;left:12px;top:614.5px;width:750px;height:17px;background:#94b068;border-top:1px solid #8fa27a;box-sizing:border-box"></div>
<div class="t" style="left:19.3px;top:618.0px;font-size:10.368px;line-height:12px;font-weight:bold;color:#fbfbf4;transform:scaleX(0.9259);transform-origin:0 0;">Diet</div>
<svg style="position:absolute;left:746.3px;top:618.7px;" width="13" height="13" viewBox="0 0 13 13"><defs><radialGradient id="cg" cx="0.45" cy="0.4" r="0.6"><stop offset="0" stop-color="#ffffff"/><stop offset="1" stop-color="#cfcac2"/></radialGradient></defs><circle cx="6.5" cy="6.5" r="5.9" fill="#f2efe8" stroke="#f6f3d8" stroke-width="0.8"/><circle cx="6.5" cy="6.5" r="5" fill="url(#cg)" stroke="#7a5f4c" stroke-width="1"/><path d="M7.4 4.6 L5.3 6.5 L7.4 8.4" stroke="#333" stroke-width="1.1" fill="none"/></svg>
<div style="position:absolute;left:14.5px;top:631.5px;width:746.5px;height:17.3px;background:#d4d4d4;"></div>
<div class="t" style="left:18.5px;top:635.8px;font-size:10.368px;line-height:12px;font-weight:bold;color:#444;transform:scaleX(0.9259);transform-origin:0 0;">Start Date</div>
<div class="t" style="left:114.4px;top:635.8px;font-size:10.368px;line-height:12px;font-weight:bold;color:#444;transform:scaleX(0.9259);transform-origin:0 0;">Order Category</div>
<div class="t" style="left:263.4px;top:635.8px;font-size:10.368px;line-height:12px;font-weight:bold;color:#444;transform:scaleX(0.9259);transform-origin:0 0;">Order</div>
<div class="t" style="left:524.4px;top:635.8px;font-size:10.368px;line-height:12px;font-weight:bold;color:#444;transform:scaleX(0.9259);transform-origin:0 0;">Order Status</div>
<div class="t" style="left:636.1px;top:635.8px;font-size:10.368px;line-height:12px;font-weight:bold;color:#444;transform:scaleX(0.9259);transform-origin:0 0;">Revision Date</div>
<div class="t" style="left:17.7px;top:652.1999999999999px;font-size:10.368px;line-height:12px;font-weight:normal;color:#222;transform:scaleX(0.9259);transform-origin:0 0;">5/12/2016</div>
<div class="t" style="left:114.4px;top:652.1999999999999px;font-size:10.368px;line-height:12px;font-weight:normal;color:#222;transform:scaleX(0.9259);transform-origin:0 0;">Dietary - Diet</div>
<div class="t" style="left:263.4px;top:652.1999999999999px;font-size:10.368px;line-height:12px;font-weight:normal;color:#222;transform:scaleX(0.9259);transform-origin:0 0;">LCS, NAS diet, Mechanical Soft texture, Thin consistency</div>
<div class="t" style="left:524.4px;top:652.1999999999999px;font-size:10.368px;line-height:12px;font-weight:normal;color:#222;transform:scaleX(0.9259);transform-origin:0 0;">Active</div>
<div class="t" style="left:636.1px;top:652.1999999999999px;font-size:10.368px;line-height:12px;font-weight:normal;color:#222;transform:scaleX(0.9259);transform-origin:0 0;">5/12/2016</div>
<div style="position:absolute;left:764px;top:614.5px;width:750px;height:200px;background:#fff;border-bottom:1px solid #b4b8ae;box-sizing:border-box"></div>
<div style="position:absolute;left:764px;top:614.5px;width:750px;height:194.5px;background:#fff;border:1px solid #a9bc8c;border-top:none;box-sizing:border-box"></div>
<div style="position:absolute;left:764px;top:614.5px;width:750px;height:17px;background:#94b068;border-top:1px solid #8fa27a;box-sizing:border-box"></div>
<div class="t" style="left:770px;top:618.5999999999999px;font-size:10.368px;line-height:12px;font-weight:bold;color:#fbfbf4;transform:scaleX(0.9259);transform-origin:0 0;">Activities of Daily Living</div>
<svg style="position:absolute;left:1346px;top:618.6px;" width="13" height="13" viewBox="0 0 13 13"><defs><radialGradient id="cg" cx="0.45" cy="0.4" r="0.6"><stop offset="0" stop-color="#ffffff"/><stop offset="1" stop-color="#cfcac2"/></radialGradient></defs><circle cx="6.5" cy="6.5" r="5.9" fill="#f2efe8" stroke="#f6f3d8" stroke-width="0.8"/><circle cx="6.5" cy="6.5" r="5" fill="url(#cg)" stroke="#7a5f4c" stroke-width="1"/><path d="M7.4 4.6 L5.3 6.5 L7.4 8.4" stroke="#333" stroke-width="1.1" fill="none"/></svg>
<div class="t" style="left:1362px;top:616.8px;font-size:10.368px;line-height:12px;font-weight:bold;color:#fbfbf4;transform:scaleX(0.9259);transform-origin:0 0;">Type: NC</div>
<div style="position:absolute;left:1408.7px;top:617.6px;width:13.8px;height:9.2px;background:#2f6aa8;border-radius:2px;border:1px solid #1d4f85;box-sizing:border-box"></div>
<div class="t" style="left:1265.6px;width:300px;text-align:center;top:618.5px;font-size:7.56px;line-height:9px;font-weight:bold;color:#dde8f5;transform:scaleX(0.9259);transform-origin:50% 0;">3.0</div>
<div class="t" style="left:1433px;top:616.8px;font-size:10.368px;line-height:12px;font-weight:bold;color:#fbfbf4;transform:scaleX(0.9259);transform-origin:0 0;">ARD: 5/17/2016</div>
<div style="position:absolute;left:765px;top:631.5px;width:735px;height:19.3px;background:#d4d4d4;"></div>
<div class="t" style="left:766.6px;top:635.8px;font-size:10.368px;line-height:12px;font-weight:bold;color:#222;transform:scaleX(0.9259);transform-origin:0 0;">Activity</div>
<div class="t" style="left:1275.7px;width:300px;text-align:center;top:635.8px;font-size:10.368px;line-height:12px;font-weight:bold;color:#222;transform:scaleX(0.9259);transform-origin:50% 0;">Value</div>
<div style="position:absolute;left:765px;top:650.8px;width:735px;height:157.7px;overflow:hidden">
<div style="position:absolute;left:1px;top:0.0px;width:734px;height:15.2px;background:#fff"></div>
<div class="t" style="left:3.3px;top:2.5px;font-size:10.368px;line-height:12px;color:#222;transform:scaleX(0.9259);transform-origin:0 0">Bed mobility: self-performance</div>
<div class="t" style="left:560.7px;width:200px;text-align:center;top:2.5px;font-size:10.368px;line-height:12px;color:#222;transform:scaleX(0.9259);transform-origin:50% 0">6071CD2D-</div>
<div style="position:absolute;left:1px;top:15.2px;width:734px;height:15.2px;background:#eeeeee"></div>
<div class="t" style="left:3.3px;top:17.7px;font-size:10.368px;line-height:12px;color:#222;transform:scaleX(0.9259);transform-origin:0 0">Bed mobility: support provided</div>
<div class="t" style="left:560.7px;width:200px;text-align:center;top:17.7px;font-size:10.368px;line-height:12px;color:#222;transform:scaleX(0.9259);transform-origin:50% 0">BE6107BC-</div>
<div style="position:absolute;left:1px;top:30.4px;width:734px;height:15.2px;background:#fff"></div>
<div class="t" style="left:3.3px;top:32.9px;font-size:10.368px;line-height:12px;color:#222;transform:scaleX(0.9259);transform-origin:0 0">Transfer: self-performance</div>
<div class="t" style="left:560.7px;width:200px;text-align:center;top:32.9px;font-size:10.368px;line-height:12px;color:#222;transform:scaleX(0.9259);transform-origin:50% 0">ABEDB047-</div>
<div style="position:absolute;left:1px;top:45.599999999999994px;width:734px;height:15.2px;background:#eeeeee"></div>
<div class="t" style="left:3.3px;top:48.099999999999994px;font-size:10.368px;line-height:12px;color:#222;transform:scaleX(0.9259);transform-origin:0 0">Transfer: support provided</div>
<div class="t" style="left:560.7px;width:200px;text-align:center;top:48.099999999999994px;font-size:10.368px;line-height:12px;color:#222;transform:scaleX(0.9259);transform-origin:50% 0">4CEAA5EC-</div>
<div style="position:absolute;left:1px;top:60.8px;width:734px;height:15.2px;background:#fff"></div>
<div class="t" style="left:3.3px;top:63.3px;font-size:10.368px;line-height:12px;color:#222;transform:scaleX(0.9259);transform-origin:0 0">Walk in room: self-performance</div>
<div class="t" style="left:560.7px;width:200px;text-align:center;top:63.3px;font-size:10.368px;line-height:12px;color:#222;transform:scaleX(0.9259);transform-origin:50% 0">609B5220-</div>
<div style="position:absolute;left:1px;top:76.0px;width:734px;height:15.2px;background:#eeeeee"></div>
<div class="t" style="left:3.3px;top:78.5px;font-size:10.368px;line-height:12px;color:#222;transform:scaleX(0.9259);transform-origin:0 0">Walk in room: support provided</div>
<div class="t" style="left:560.7px;width:200px;text-align:center;top:78.5px;font-size:10.368px;line-height:12px;color:#222;transform:scaleX(0.9259);transform-origin:50% 0">C1181459-</div>
<div style="position:absolute;left:1px;top:91.19999999999999px;width:734px;height:15.2px;background:#fff"></div>
<div class="t" style="left:3.3px;top:93.69999999999999px;font-size:10.368px;line-height:12px;color:#222;transform:scaleX(0.9259);transform-origin:0 0">Walk in corridor: self-performance</div>
<div class="t" style="left:560.7px;width:200px;text-align:center;top:93.69999999999999px;font-size:10.368px;line-height:12px;color:#222;transform:scaleX(0.9259);transform-origin:50% 0">E0EDFC0A-</div>
<div style="position:absolute;left:1px;top:106.39999999999999px;width:734px;height:15.2px;background:#eeeeee"></div>
<div class="t" style="left:3.3px;top:108.89999999999999px;font-size:10.368px;line-height:12px;color:#222;transform:scaleX(0.9259);transform-origin:0 0">Walk in corridor: support provided</div>
<div class="t" style="left:560.7px;width:200px;text-align:center;top:108.89999999999999px;font-size:10.368px;line-height:12px;color:#222;transform:scaleX(0.9259);transform-origin:50% 0">3126BF66-</div>
<div style="position:absolute;left:1px;top:121.6px;width:734px;height:15.2px;background:#fff"></div>
<div class="t" style="left:3.3px;top:124.1px;font-size:10.368px;line-height:12px;color:#222;transform:scaleX(0.9259);transform-origin:0 0">Locomotion on unit: self-performance</div>
<div class="t" style="left:560.7px;width:200px;text-align:center;top:124.1px;font-size:10.368px;line-height:12px;color:#222;transform:scaleX(0.9259);transform-origin:50% 0">4B5C51D5-</div>
<div style="position:absolute;left:1px;top:136.79999999999998px;width:734px;height:15.2px;background:#eeeeee"></div>
<div class="t" style="left:3.3px;top:139.29999999999998px;font-size:10.368px;line-height:12px;color:#222;transform:scaleX(0.9259);transform-origin:0 0">Locomotion on unit: support provided</div>
<div class="t" style="left:560.7px;width:200px;text-align:center;top:139.29999999999998px;font-size:10.368px;line-height:12px;color:#222;transform:scaleX(0.9259);transform-origin:50% 0">3B430F74-</div>
<div style="position:absolute;left:1px;top:152.0px;width:734px;height:15.2px;background:#fff"></div>
<div class="t" style="left:3.3px;top:154.5px;font-size:10.368px;line-height:12px;color:#222;transform:scaleX(0.9259);transform-origin:0 0">Locomotion off unit: self-performance</div>
<div class="t" style="left:560.7px;width:200px;text-align:center;top:154.5px;font-size:10.368px;line-height:12px;color:#222;transform:scaleX(0.9259);transform-origin:50% 0">E0901005-</div>
</div>
<div style="position:absolute;left:1500px;top:631.5px;width:13px;height:177px;background:#f1f1f1;"></div>
<div style="position:absolute;left:1502px;top:645px;width:9.5px;height:81.5px;background:#c1c1c1;"></div>
<svg style="position:absolute;left:1502px;top:635.5px;" width="9" height="5" viewBox="0 0 9 5"><path d="M1 4.5 L4.5 1 L8 4.5z" fill="#a3a3a3"/></svg>
<svg style="position:absolute;left:1502px;top:799.5px;" width="9" height="5" viewBox="0 0 9 5"><path d="M1 0.5 L4.5 4 L8 0.5z" fill="#505050"/></svg>
</body></html>
